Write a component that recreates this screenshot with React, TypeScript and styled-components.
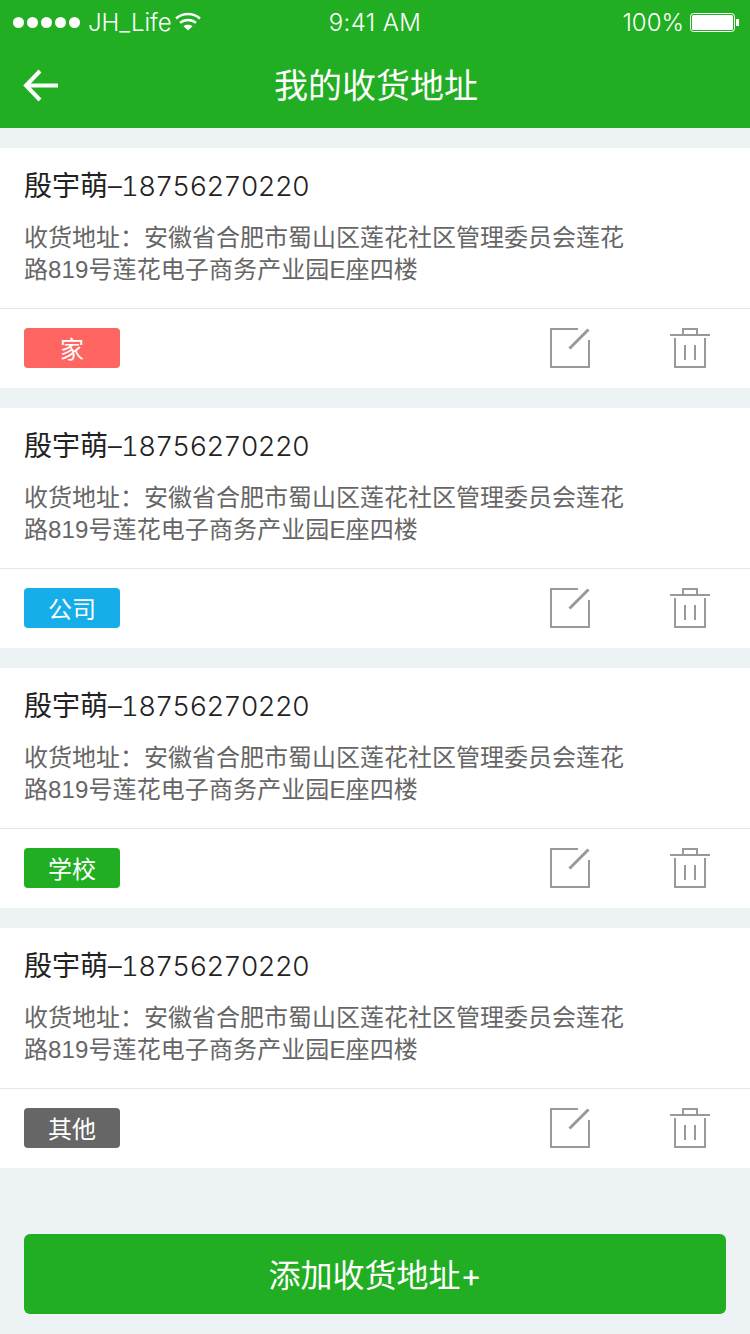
import React from 'react';
import styled, { createGlobalStyle } from 'styled-components';

const GREEN = '#22ae22';
const FONT = '"Liberation Sans", "Noto Sans CJK SC", sans-serif';
const LIGHT_FONT = 'Inter, "Noto Sans CJK SC", sans-serif';

const GlobalStyle = createGlobalStyle`
  html, body {
    margin: 0;
    padding: 0;
    background: #edf2f5;
    font-family: ${FONT};
  }
`;

const Page = styled.div`
  width: 750px;
  height: 1334px;
  display: flex;
  flex-direction: column;
  overflow: hidden;
  background: #edf2f5;
`;

const Header = styled.header`
  height: 128px;
  display: flex;
  flex-direction: column;
  background: ${GREEN};
  color: #fff;
`;

const StatusBar = styled.div`
  height: 44px;
  display: grid;
  grid-template-columns: 1fr auto 1fr;
  align-items: center;
  padding: 0 11px 0 13px;
  font-family: ${LIGHT_FONT};
  font-weight: 300;
  font-size: 24px;
`;

const StatusLeft = styled.div`
  display: flex;
  align-items: center;
`;

const StatusRight = styled.div`
  display: flex;
  align-items: center;
  justify-content: flex-end;
  gap: 6px;
`;

const Clock = styled.span`
  letter-spacing: 0.4px;
  margin-right: 2px;
`;

const Dots = styled.div`
  display: flex;
  gap: 3px;
  margin-right: 8px;
`;

const Dot = styled.span`
  width: 11px;
  height: 11px;
  border-radius: 50%;
  background: #fff;
`;

const Carrier = styled.span`
  margin-right: 3px;
`;

const NavBar = styled.div`
  flex: 1;
  display: flex;
  align-items: center;
  justify-content: center;
  position: relative;
  padding-bottom: 6px;
`;

const BackButton = styled.span`
  position: absolute;
  left: 23px;
  top: 24px;
  display: flex;
`;

const Title = styled.h1`
  margin: 0;
  font-size: 34px;
  font-weight: 400;
  padding-left: 2px;
`;

const List = styled.main`
  display: flex;
  flex-direction: column;
  gap: 20px;
  padding-top: 20px;
`;

const Card = styled.section`
  background: #fff;
`;

const CardBody = styled.div`
  height: 161px;
  box-sizing: border-box;
  padding: 19px 24px 0;
  border-bottom: 1px solid #e6e6e6;
`;

const Name = styled.div`
  display: flex;
  align-items: baseline;
  font-family: ${LIGHT_FONT};
  font-size: 28px;
  line-height: 38px;
  color: #222;
`;

const Phone = styled.span`
  font-weight: 300;
  font-feature-settings: 'tnum';
  font-size: 27.5px;
  letter-spacing: -0.7px;
`;

const Address = styled.div`
  margin-top: 17px;
  font-size: 24px;
  line-height: 32px;
  color: #666;
`;

const AddressLine = styled.div<{ $spacing?: number }>`
  letter-spacing: ${(p) => p.$spacing ?? 0}px;
`;

const CardFooter = styled.div`
  height: 79px;
  box-sizing: border-box;
  display: flex;
  align-items: flex-start;
  padding: 19px 40px 0 24px;
`;

const Tag = styled.span<{ $color: string }>`
  width: 96px;
  height: 40px;
  padding-bottom: 2px;
  box-sizing: border-box;
  display: flex;
  align-items: center;
  justify-content: center;
  border-radius: 4px;
  background: ${(p) => p.$color};
  color: #fff;
  font-size: 24px;
`;

const Actions = styled.div`
  margin-left: auto;
  display: flex;
  gap: 80px;
`;

const IconButton = styled.span`
  display: flex;
  width: 40px;
  height: 40px;
`;

const AddButton = styled.button`
  margin: 66px 24px 0;
  height: 80px;
  padding: 0 0 2px;
  border: none;
  border-radius: 6px;
  background: ${GREEN};
  color: #fff;
  font-family: ${LIGHT_FONT};
  font-size: 32px;
`;

const WifiIcon = () => (
  <svg width="26" height="20" viewBox="0 0 26 20" fill="none" stroke="#fff" strokeWidth="2.4">
    <path d="M1 6.5C8 0.5 18 0.5 25 6.5" />
    <path d="M5 10.8C9.5 7 16.5 7 21 10.8" />
    <path d="M13 18.5L8.5 14.2C11 12.3 15 12.3 17.5 14.2Z" fill="#fff" stroke="none" />
  </svg>
);

const BatteryIcon = () => (
  <svg width="49" height="19" viewBox="0 0 49 19">
    <rect x="0.5" y="0.5" width="44" height="18" rx="3" fill="none" stroke="#fff" />
    <rect x="2" y="2" width="41" height="15" rx="1.5" fill="#fff" />
    <rect x="46" y="6" width="3" height="7" fill="#fff" />
  </svg>
);

const BackIcon = () => (
  <svg width="36" height="36" viewBox="0 0 36 36" fill="none" stroke="#fff" strokeWidth="4">
    <path d="M35 17.5H3" />
    <path d="M17 3L3 17.5L17 32" />
  </svg>
);

const EditIcon = () => (
  <svg width="40" height="40" viewBox="0 0 40 40" fill="none" stroke="#999" strokeWidth="2">
    <path d="M28 1H1V39H39V12" />
    <path d="M19.5 20.5L38.5 1.5" strokeWidth="3" />
  </svg>
);

const TrashIcon = () => (
  <svg width="40" height="40" viewBox="0 0 40 40" fill="none" stroke="#999" strokeWidth="2">
    <path d="M0 7H40" />
    <path d="M13 7V1H27V7" />
    <path d="M5 10V39H35V10" />
    <path d="M15 17V32M25 17V32" />
  </svg>
);

const addresses = [
  { tag: '家', color: '#ff6661' },
  { tag: '公司', color: '#16aee9' },
  { tag: '学校', color: GREEN },
  { tag: '其他', color: '#666666' },
];

const App = () => {
  return (
    <Page>
      <GlobalStyle />
      <Header>
        <StatusBar>
          <StatusLeft>
            <Dots>
              {[0, 1, 2, 3, 4].map((i) => (
                <Dot key={i} />
              ))}
            </Dots>
            <Carrier>JH_Life</Carrier>
            <WifiIcon />
          </StatusLeft>
          <Clock>9:41 AM</Clock>
          <StatusRight>
            <span>100%</span>
            <BatteryIcon />
          </StatusRight>
        </StatusBar>
        <NavBar>
          <BackButton>
            <BackIcon />
          </BackButton>
          <Title>我的收货地址</Title>
        </NavBar>
      </Header>
      <List>
        {addresses.map((item) => (
          <Card key={item.tag}>
            <CardBody>
              <Name>
                <span>殷宇萌</span>
                <Phone>–18756270220</Phone>
              </Name>
              <Address>
                <AddressLine>收货地址：安徽省合肥市蜀山区莲花社区管理委员会莲花</AddressLine>
                <AddressLine $spacing={0.1}>路819号莲花电子商务产业园E座四楼</AddressLine>
              </Address>
            </CardBody>
            <CardFooter>
              <Tag $color={item.color}>{item.tag}</Tag>
              <Actions>
                <IconButton>
                  <EditIcon />
                </IconButton>
                <IconButton>
                  <TrashIcon />
                </IconButton>
              </Actions>
            </CardFooter>
          </Card>
        ))}
      </List>
      <AddButton>添加收货地址+</AddButton>
    </Page>
  );
};

export default App;
